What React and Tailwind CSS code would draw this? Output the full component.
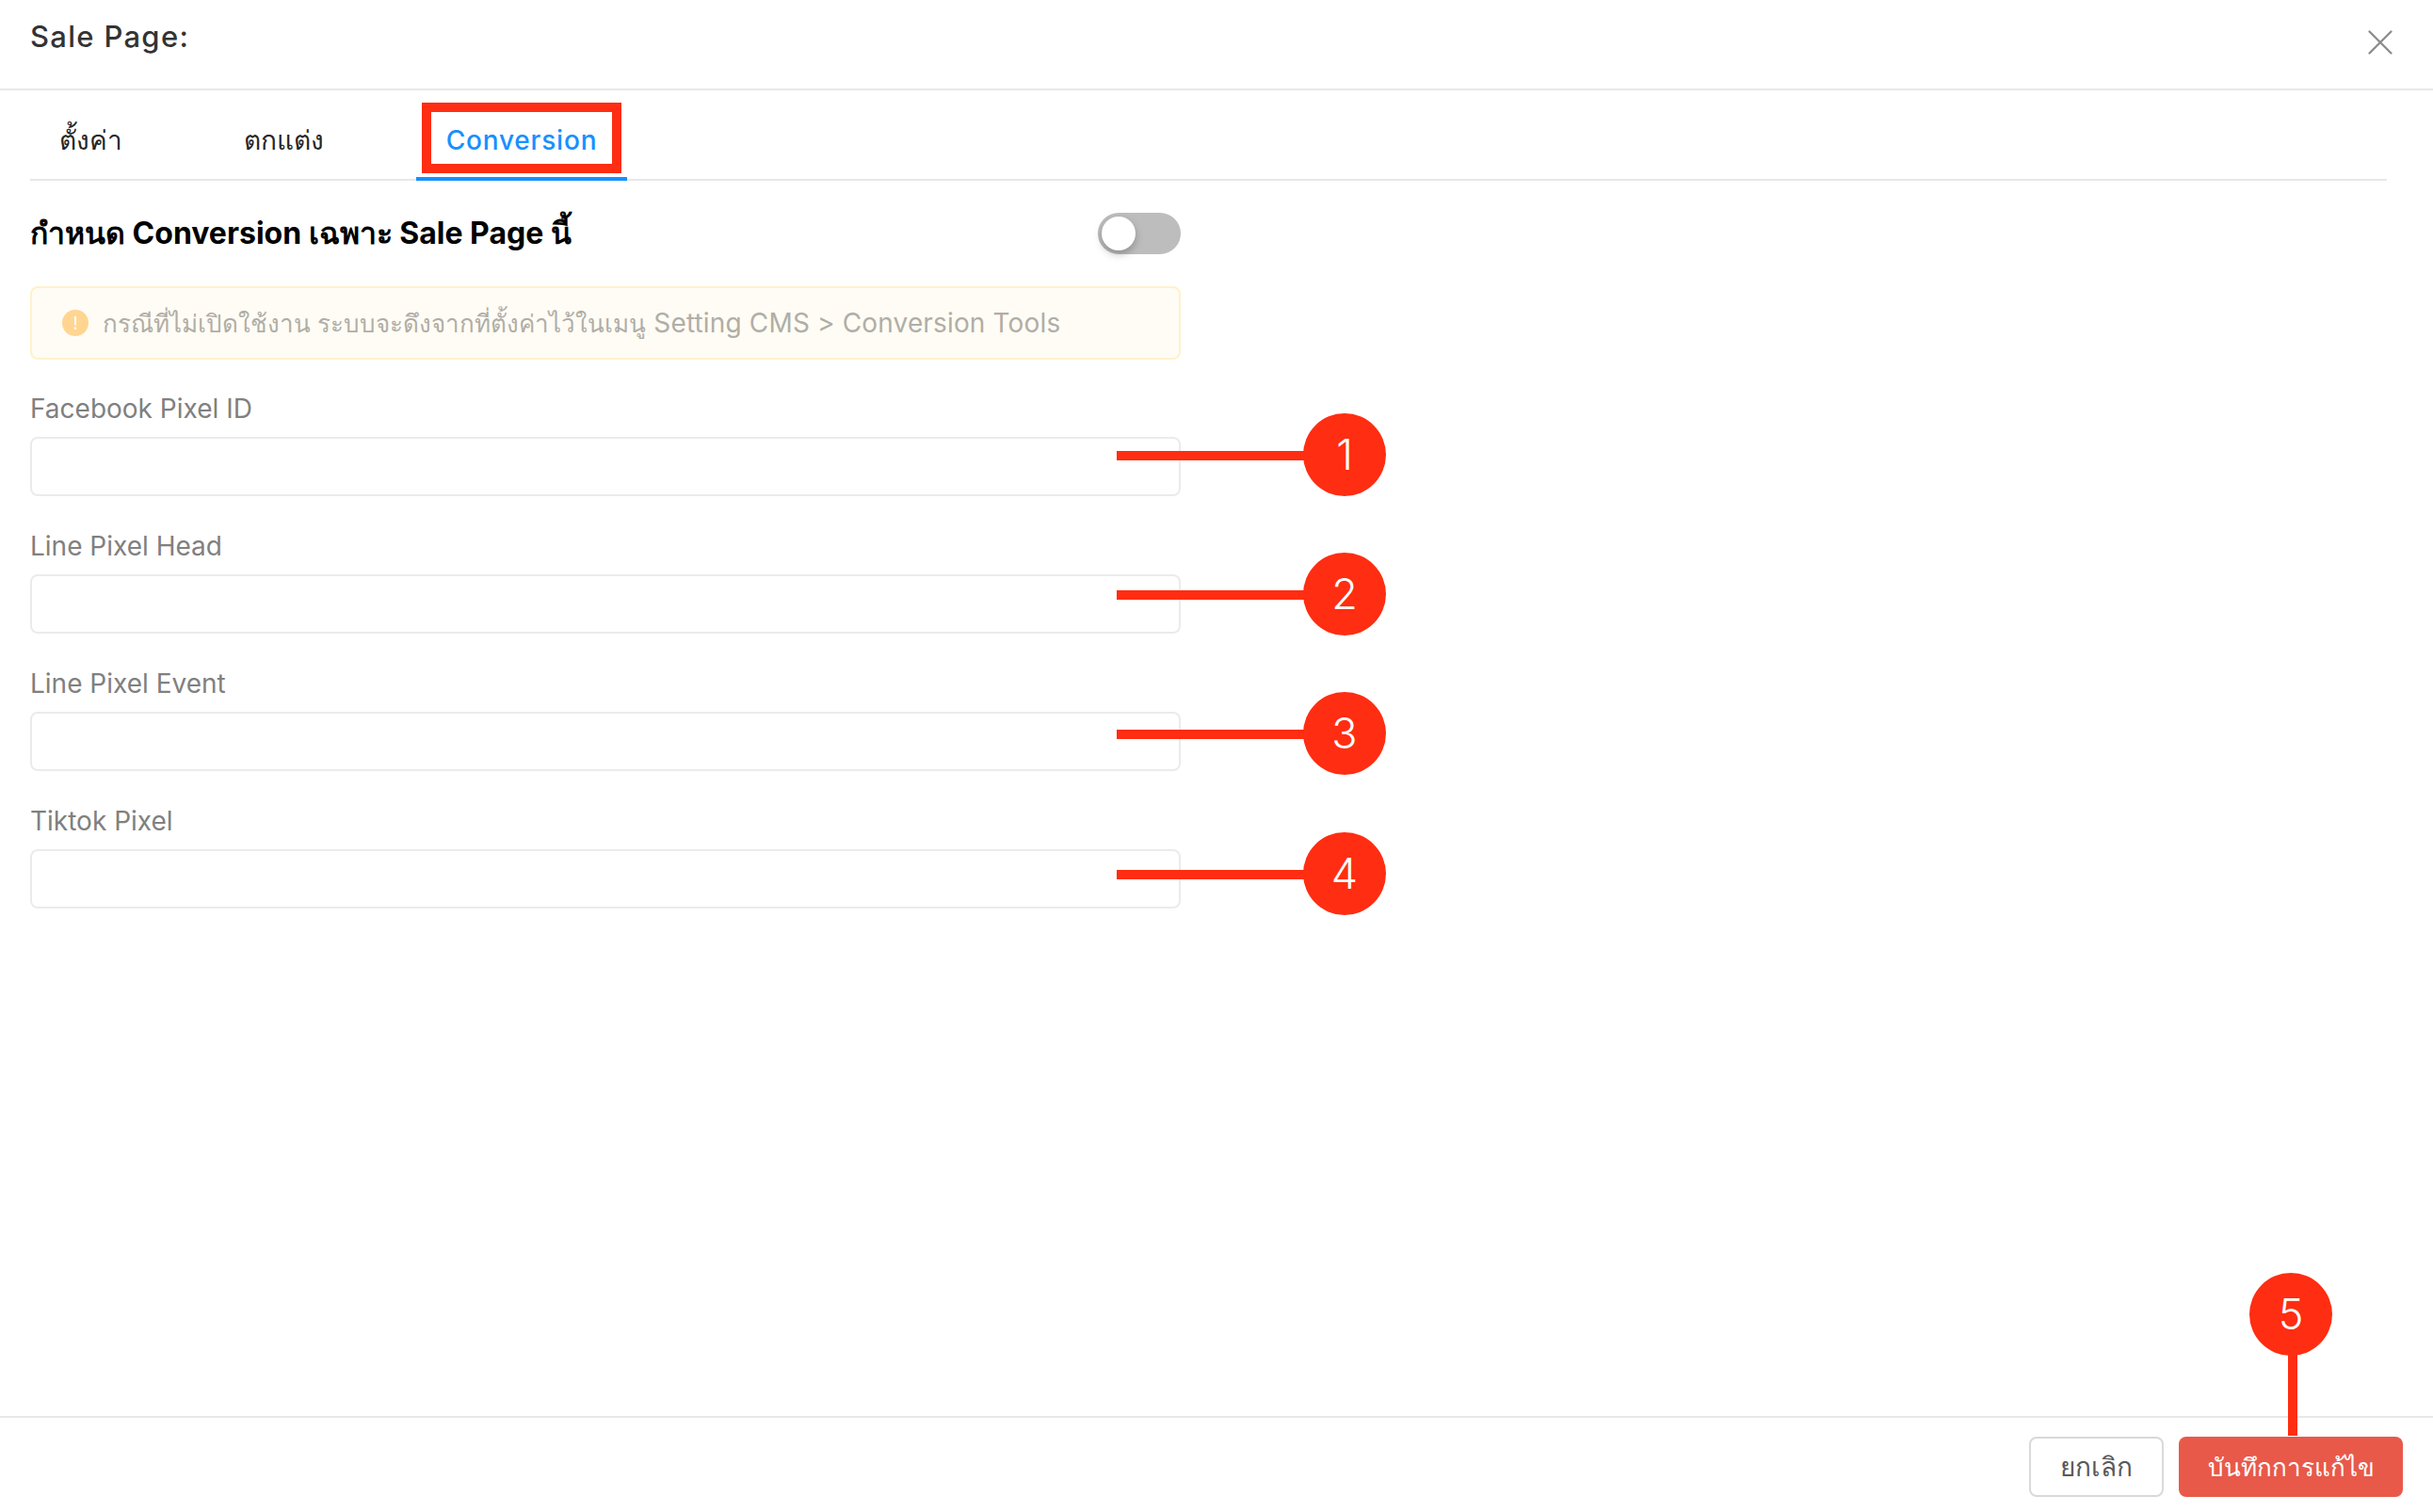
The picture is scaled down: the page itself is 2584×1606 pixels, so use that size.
import React from "react";
import { X } from "lucide-react";

const fields = ["Facebook Pixel ID", "Line Pixel Head", "Line Pixel Event", "Tiktok Pixel"];

const Callout = ({ className, number }) => (
  <div className={`absolute flex items-center ${className}`}>
    <div className="mt-[2px] h-[10px] w-[204px] bg-[#ff2d12]"></div>
    <div className="-ml-[6px] flex h-[88px] w-[88px] items-center justify-center rounded-full bg-[#ff2d12] text-[45px] font-light text-white">
      {number}
    </div>
  </div>
);

const App = () => {
  return (
    <div className="relative flex h-[1606px] flex-col overflow-hidden bg-white font-['Inter','Noto_Sans',sans-serif]">
      {/* Header */}
      <div className="flex h-[96px] shrink-0 justify-between border-b-2 border-[#e8e8e8] pl-8 pr-[33px]">
        <h1 className="pt-[18px] text-[31px] leading-[42px] font-medium tracking-[1.3px] text-[#333333]">Sale Page:</h1>
        <X className="mt-[22px] h-[46px] w-[46px] text-[#8c8c8c]" strokeWidth={1.2} />
      </div>

      {/* Tabs */}
      <div className="ml-8 mr-[49px] flex h-[96px] shrink-0 gap-[65px] border-b-2 border-[#e8e8e8] text-[28px] font-medium">
        <div className="w-[129px] pt-[33px] text-center leading-[40px] text-[#262626]">ตั้งค่า</div>
        <div className="w-[151px] pt-[33px] text-center leading-[40px] text-[#262626]">ตกแต่ง</div>
        <div className="-mb-[2px] w-[224px] border-b-[4px] border-[#1890ff] pt-[33px] text-center leading-[40px] tracking-[0.8px] text-[#1890ff]">Conversion</div>
      </div>

      {/* Form */}
      <div className="flex w-[1254px] flex-col pl-8">
        <div className="mt-[34px] flex h-[44px] items-center justify-between">
          <h2 className="text-[32px] leading-[44px] font-bold text-black">กำหนด Conversion เฉพาะ Sale Page นี้</h2>
          <div className="flex h-[44px] w-[88px] items-center rounded-full bg-[#bdbdbd] pl-1">
            <div className="h-[36px] w-[36px] rounded-full bg-white shadow-[0_4px_8px_rgba(0,0,0,0.25)]"></div>
          </div>
        </div>

        <div className="mt-[34px] flex h-[78px] items-center gap-[15px] rounded-lg border-2 border-[#fff1cc] bg-[#fffcf5] pl-[32px]">
          <div className="flex h-[28px] w-[28px] items-center justify-center rounded-full bg-[#ffd591] text-[18px] text-white">!</div>
          <span className="text-[28px] leading-[40px] tracking-[0.15px] text-[#b0aea6]">
            <span className="text-[26px] tracking-normal">กรณีที่ไม่เปิดใช้งาน ระบบจะดึงจากที่ตั้งค่าไว้ในเมนู</span> Setting CMS &gt; Conversion Tools
          </span>
        </div>

        <div className="mt-[32px] flex flex-col gap-[33px]">
          {fields.map((label) => (
            <div key={label}>
              <label className="block h-[50px] text-[28px] leading-[40px] text-[#808080]">{label}</label>
              <div className="h-[63px] rounded-lg border-2 border-[#ebebeb]"></div>
            </div>
          ))}
        </div>
      </div>

      {/* Footer */}
      <div className="mt-auto flex h-[102px] shrink-0 justify-end gap-4 border-t-2 border-[#e8e8e8] pr-8 pt-5">
        <button className="h-[64px] w-[143px] rounded-lg border-2 border-[#d9d9d9] bg-white text-[28px] font-medium text-[#595959]">ยกเลิก</button>
        <button className="h-[64px] w-[238px] rounded-lg bg-[#e8594a] text-[26px] font-medium text-white">บันทึกการแก้ไข</button>
      </div>

      {/* Annotations */}
      <div className="absolute left-[448px] top-[109px] h-[75px] w-[212px] border-[10px] border-[#ff2d12]"></div>
      <Callout className="left-[1186px] top-[439px]" number="1" />
      <Callout className="left-[1186px] top-[587px]" number="2" />
      <Callout className="left-[1186px] top-[735px]" number="3" />
      <Callout className="left-[1186px] top-[884px]" number="4" />
      <div className="absolute left-[2389px] top-[1352px] flex flex-col items-center">
        <div className="flex h-[88px] w-[88px] items-center justify-center rounded-full bg-[#ff2d12] text-[45px] font-light text-white">5</div>
        <div className="-mt-[2px] ml-[4px] h-[87px] w-[10px] bg-[#ff2d12]"></div>
      </div>
    </div>
  );
};

export default App;
